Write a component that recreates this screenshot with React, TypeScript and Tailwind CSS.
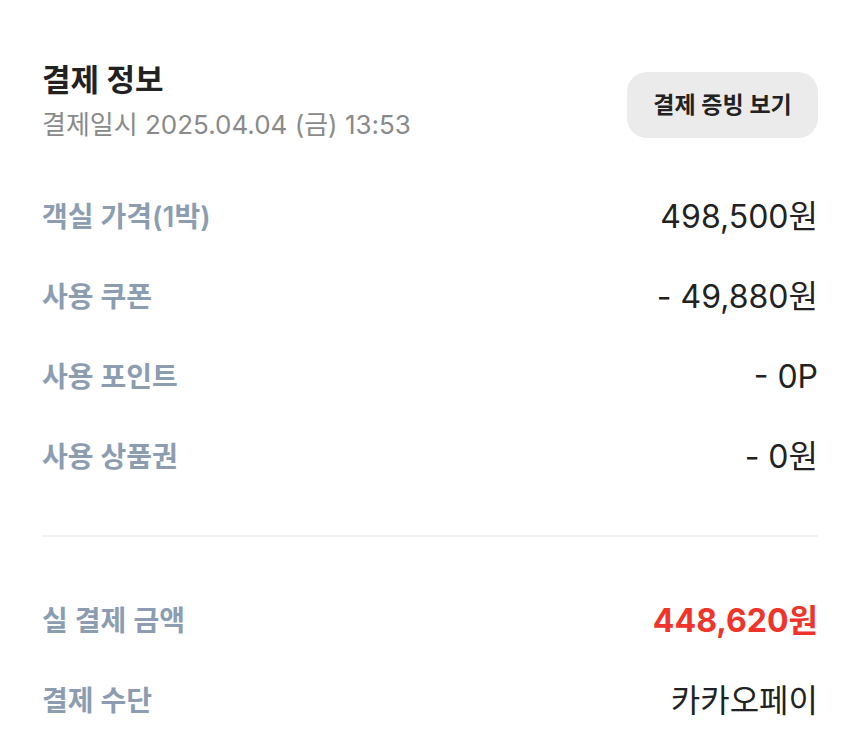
const rows = [
  { label: "객실 가격(1박)", value: "498,500원" },
  { label: "사용 쿠폰", value: "- 49,880원" },
  { label: "사용 포인트", value: "- 0P" },
  { label: "사용 상품권", value: "- 0원" },
];

function Row({ label, value, valueClass }: { label: string; value: string; valueClass?: string }) {
  return (
    <div className="flex h-[80px] items-center justify-between">
      <span className="text-[28px] font-semibold text-[#8c9db1]">{label}</span>
      <span className={valueClass ?? "text-[32px] text-[#222]"}>{value}</span>
    </div>
  );
}

export default function App() {
  return (
    <div
      className="min-h-[750px] bg-white px-[42px] pt-[60px]"
      style={{ fontFamily: 'Inter, "Noto Sans CJK KR", sans-serif' }}
    >
      <div className="flex items-center justify-between">
        <div>
          <h1 className="text-[31px] font-bold leading-[40px] text-[#222]">결제 정보</h1>
          <p className="mt-[6px] text-[26px] leading-[38px] text-[#8a8a8a]">결제일시 2025.04.04 (금) 13:53</p>
        </div>
        <button className="mt-[6px] h-[66px] w-[191px] rounded-[20px] bg-[#ebebeb] text-[23px] font-semibold text-[#222]">
          결제 증빙 보기
        </button>
      </div>

      <div className="mt-[33px]">
        {rows.map((r) => (
          <Row key={r.label} label={r.label} value={r.value} />
        ))}
      </div>

      <div className="mt-[38px] h-[2px] bg-[#f0f0f0]" />

      <div className="mt-[44px]">
        <Row label="실 결제 금액" value="448,620원" valueClass="text-[32px] font-bold text-[#f0342a]" />
        <Row label="결제 수단" value="카카오페이" />
      </div>
    </div>
  );
}
